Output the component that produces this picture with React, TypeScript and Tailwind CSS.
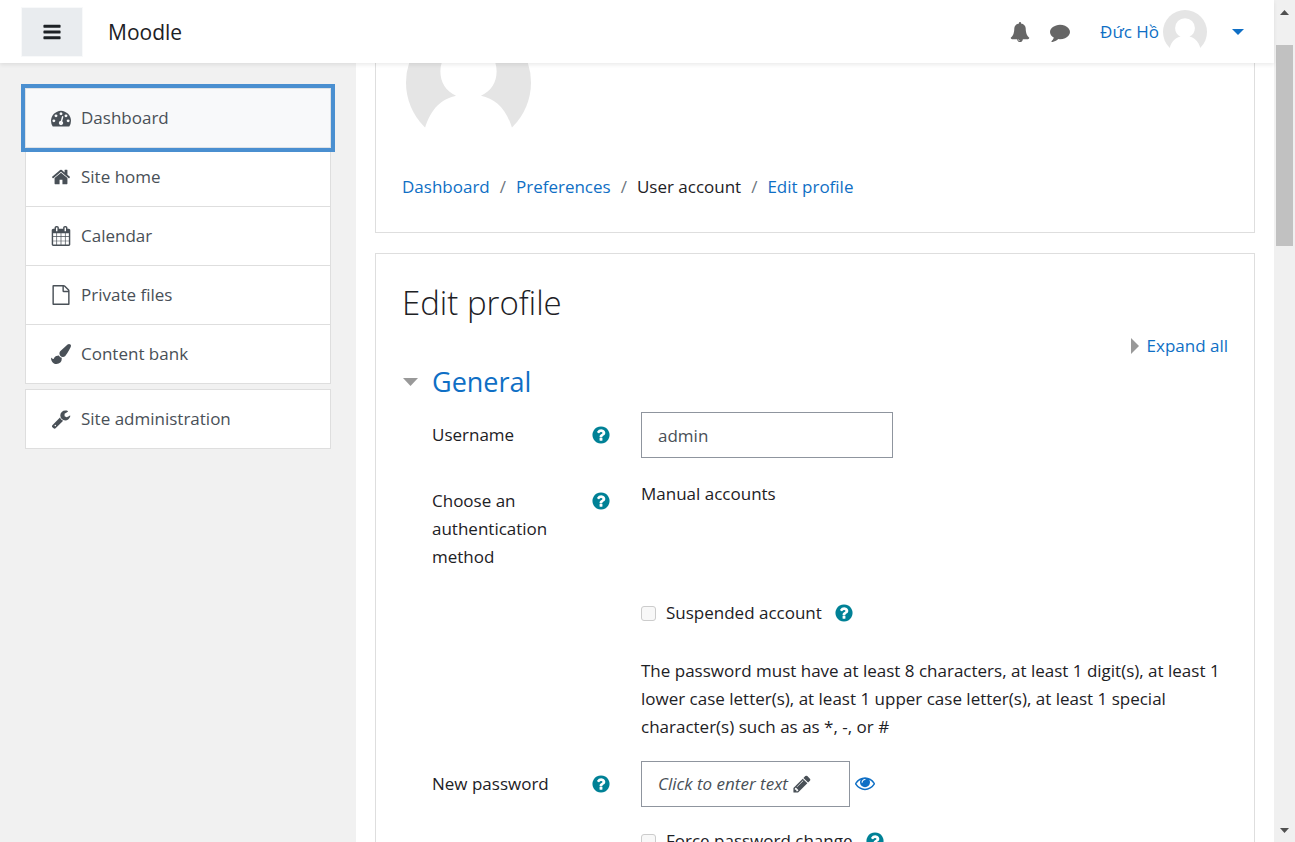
import React from "react";

const paths = {
  bars: "M1664 1344v128q0 26-19 45t-45 19h-1408q-26 0-45-19t-19-45v-128q0-26 19-45t45-19h1408q26 0 45 19t19 45zm0-512v128q0 26-19 45t-45 19h-1408q-26 0-45-19t-19-45v-128q0-26 19-45t45-19h1408q26 0 45 19t19 45zm0-512v128q0 26-19 45t-45 19h-1408q-26 0-45-19t-19-45v-128q0-26 19-45t45-19h1408q26 0 45 19t19 45z",
  home: "M1472 992v480q0 26-19 45t-45 19h-384v-384h-256v384h-384q-26 0-45-19t-19-45v-480q0-1 .5-3t.5-3l575-474 575 474q1 2 1 6zm223-69l-62 74q-8 9-21 11h-3q-13 0-21-7l-692-577-692 577q-12 8-24 7-13-2-21-11l-62-74q-8-10-7-23.5t11-21.5l719-599q32-26 76-26t76 26l244 204v-195q0-14 9-23t23-9h192q14 0 23 9t9 23v408l219 182q10 8 11 21.5t-7 23.5z",
  calendar: "M192 1664h288v-288h-288v288zm352 0h320v-288h-320v288zm-352-352h288v-320h-288v320zm352 0h320v-320h-320v320zm-352-384h288v-288h-288v288zm736 736h320v-288h-320v288zm-384-736h320v-288h-320v288zm768 736h288v-288h-288v288zm-384-352h320v-320h-320v320zm-352-864v-288q0-13-9.5-22.5t-22.5-9.5h-64q-13 0-22.5 9.5t-9.5 22.5v288q0 13 9.5 22.5t22.5 9.5h64q13 0 22.5-9.5t9.5-22.5zm736 864h288v-320h-288v320zm-384-384h320v-288h-320v288zm384 0h288v-288h-288v288zm32-480v-288q0-13-9.5-22.5t-22.5-9.5h-64q-13 0-22.5 9.5t-9.5 22.5v288q0 13 9.5 22.5t22.5 9.5h64q13 0 22.5-9.5t9.5-22.5zm384-64v1280q0 52-38 90t-90 38h-1408q-52 0-90-38t-38-90v-1280q0-52 38-90t90-38h128v-96q0-66 47-113t113-47h64q66 0 113 47t47 113v96h384v-96q0-66 47-113t113-47h64q66 0 113 47t47 113v96h128q52 0 90 38t38 90z",
  file: "M1596 380q28 28 48 76t20 88v1152q0 40-28 68t-68 28h-1344q-40 0-68-28t-28-68v-1600q0-40 28-68t68-28h896q40 0 88 20t76 48zm-444-244v376h376q-10-29-22-41l-313-313q-12-12-41-22zm384 1528v-1024h-416q-40 0-68-28t-28-68v-416h-768v1536h1280z",
  brush: "M1615 0q70 0 122.5 46.5t52.5 116.5q0 63-45 151-332 629-465 752-97 91-218 91-126 0-216.5-92.5t-90.5-219.5q0-128 92-212l638-579q59-54 130-54zm-909 1034q39 76 106.5 130t150.5 76l1 71q4 213-129.5 347t-348.5 134q-123 0-218-46.5t-152.5-127.5-86.5-183-29-220q7 5 41 30t62 44.5 59 36.5 46 17q41 0 55-37 25-66 57.5-112.5t69.5-76 88-47.5 103-25.5 125-10.5z",
  wrench: "M448 1472q0-26-19-45t-45-19-45 19-19 45 19 45 45 19 45-19 19-45zm644-420l-682 682q-37 37-90 37-52 0-91-37l-106-108q-38-36-38-90 0-53 38-91l681-681q39 98 114.5 173.5t173.5 114.5zm634-435q0 39-23 106-47 134-164.5 217.5t-258.5 83.5q-185 0-316.5-131.5t-131.5-316.5 131.5-316.5 316.5-131.5q58 0 121.5 16.5t107.5 46.5q16 11 16 28t-16 28l-293 169v224l193 107q5-3 79-48.5t135.5-81 70.5-35.5q15 0 23.5 10t8.5 25z",
  question: "M1024 1376v-192q0-14-9-23t-23-9h-192q-14 0-23 9t-9 23v192q0 14 9 23t23 9h192q14 0 23-9t9-23zm256-672q0-88-55.5-163t-138.5-116-170-41q-243 0-371 213-15 24 8 42l132 100q7 6 19 6 16 0 25-12 53-68 86-92 34-24 86-24 48 0 85.5 26t37.5 59q0 38-20 61t-68 45q-63 28-115.5 86.5t-52.5 125.5v36q0 14 9 23t23 9h192q14 0 23-9t9-23q0-19 21.5-49.5t54.5-49.5q32-18 49-28.5t46-35 44.5-48 28-60.5 12.5-81zm384 192q0 209-103 385.5t-279.5 279.5-385.5 103-385.5-103-279.5-279.5-103-385.5 103-385.5 279.5-279.5 385.5-103 385.5 103 279.5 279.5 103 385.5z",
  pencil: "M491 1536l91-91-235-235-91 91v107h128v128h107zm523-928q0-22-22-22-10 0-17 7l-542 542q-7 7-7 17 0 22 22 22 10 0 17-7l542-542q7-7 7-17zm-54-192l416 416-832 832h-416v-416zm683 96q0 53-37 90l-166 166-416-416 166-165q36-38 90-38 53 0 91 38l235 234q37 39 37 91z",
  eye: "M1664 960q-152-236-381-353 61 104 61 225 0 185-131.5 316.5t-316.5 131.5-316.5-131.5-131.5-316.5q0-121 61-225-229 117-381 353 133 205 333.5 326.5t434.5 121.5 434.5-121.5 333.5-326.5zm-720-384q0-20-14-34t-34-14q-125 0-214.5 89.5t-89.5 214.5q0 20 14 34t34 14 34-14 14-34q0-86 61-147t147-61q20 0 34-14t14-34zm848 384q0 34-20 69-140 230-376.5 368.5t-499.5 138.5-499.5-139-376.5-368q-20-35-20-69t20-69q140-229 376.5-368t499.5-139 499.5 139 376.5 368q20 35 20 69z",
  tachometer: "M384 1152q0-53-37.5-90.5t-90.5-37.5-90.5 37.5-37.5 90.5 37.5 90.5 90.5 37.5 90.5-37.5 37.5-90.5zm192-448q0-53-37.5-90.5t-90.5-37.5-90.5 37.5-37.5 90.5 37.5 90.5 90.5 37.5 90.5-37.5 37.5-90.5zm428 481l101-382q6-26-7.5-48.5t-38.5-29.5-48 6.5-30 39.5l-101 382q-60 5-107 43.5t-63 98.5q-20 77 20 146t117 89 146-20 89-117q16-60-6-117t-72-91zm660-33q0-53-37.5-90.5t-90.5-37.5-90.5 37.5-37.5 90.5 37.5 90.5 90.5 37.5 90.5-37.5 37.5-90.5zm-640-640q0-53-37.5-90.5t-90.5-37.5-90.5 37.5-37.5 90.5 37.5 90.5 90.5 37.5 90.5-37.5 37.5-90.5zm448 192q0-53-37.5-90.5t-90.5-37.5-90.5 37.5-37.5 90.5 37.5 90.5 90.5 37.5 90.5-37.5 37.5-90.5zm320 448q0 261-141 483-19 29-54 29h-1402q-35 0-54-29-141-221-141-483 0-182 71-348t191-286 286-191 348-71 348 71 286 191 191 286 71 348z",
  bell: "M912 1696q0-16-16-16-59 0-101.5-42.5t-42.5-101.5q0-16-16-16t-16 16q0 73 51.5 124.5t124.5 51.5q16 0 16-16zm816-288q0 52-38 90t-90 38h-448q0 106-75 181t-181 75-181-75-75-181h-448q-52 0-90-38t-38-90q50-42 91-88t85-119.5 74.5-158.5 50-206 19.5-260q0-152 117-282.5t307-158.5q-8-19-8-39 0-40 28-68t68-28 68 28 28 68q0 20-8 39 190 28 307 158.5t117 282.5q0 139 19.5 260t50 206 74.5 158.5 85 119.5 91 88z",
  comment: "M1792 896q0 174-120 321.5t-326 233-450 85.5q-70 0-145-8-198 175-460 242-49 14-114 22-17 2-30.5-9t-17.5-29v-1q-3-4-.5-12t2-10 4.5-9.5l6-9 7-8.5 8-9q7-8 31-34.5t34.5-38 31-39.5 32.5-51 27-59 26-76q-157-89-247.5-220t-90.5-281q0-130 71-248.5t191-204.5 286-136.5 348-50.5q244 0 450 85.5t326 233 120 321.5z",
};

type IconName = keyof typeof paths;

function Icon({ name, className = "" }: { name: IconName; className?: string }) {
  return (
    <svg viewBox="0 0 1792 1792" aria-hidden="true" className={`size-5 shrink-0 fill-current ${className}`}>
      <path d={paths[name]} />
    </svg>
  );
}

function Avatar({ className }: { className: string }) {
  return (
    <svg viewBox="0 0 100 100" aria-hidden="true" className={`shrink-0 ${className}`}>
      <circle cx="50" cy="50" r="50" fill="#e5e5e5" />
      <path d="M15 87C20 70 29 63 40 60.500C32 57 27.500 50 27.500 41a22.500 22.500 0 0 1 45 0C72.500 50 68 57 60 60.500C71 63 80 70 85 87V101H15z" fill="#fff" />
    </svg>
  );
}

function Help({ topic }: { topic: string }) {
  return (
    <button type="button" aria-label={`Help with ${topic}`} className="flex text-[#008196]">
      <Icon name="question" />
    </button>
  );
}

const nav: { icon: IconName; label: string }[] = [
  { icon: "home", label: "Site home" },
  { icon: "calendar", label: "Calendar" },
  { icon: "file", label: "Private files" },
  { icon: "brush", label: "Content bank" },
];

function NavLink({ icon, label, className }: { icon: IconName; label: string; className: string }) {
  return (
    <a href="#" className={`flex items-center gap-2.5 px-[25px] text-[#495057] ${className}`}>
      <Icon name={icon} />
      {label}
    </a>
  );
}

function Crumb({ children }: { children: React.ReactNode }) {
  return <li className="flex gap-2.5 not-first:before:text-[#6c757d] not-first:before:content-['/']">{children}</li>;
}

function Row({ label, help, id, children }: { label?: string; help?: boolean; id?: string; children: React.ReactNode }) {
  return (
    <div className="flex">
      <div className="flex w-[209px] shrink-0 items-start justify-between pt-[9px] pr-[30px]">
        {label && (id ? <label htmlFor={id} className="w-36">{label}</label> : <span className="w-36">{label}</span>)}
        {help && label && <div className="pt-1"><Help topic={label} /></div>}
      </div>
      <div className="min-w-0 flex-1">{children}</div>
    </div>
  );
}

function CheckRow({ id, label }: { id: string; label: string }) {
  return (
    <div className="flex items-center">
      <input id={id} type="checkbox" className="mr-2.5 size-[15px] appearance-none rounded-[3px] border border-[#ccc] bg-[#f8f8f8]" />
      <label htmlFor={id} className="mr-3">{label}</label>
      <Help topic={label} />
    </div>
  );
}

export default function App() {
  return (
    <div className="flex h-screen overflow-hidden bg-white font-['Open_Sans','Noto_Sans',sans-serif] text-[17px] leading-7 text-[#1d2125]">
      <div className="flex min-w-0 flex-1 flex-col">
        <header className="z-10 flex h-[63px] shrink-0 items-center bg-white pl-[21px] pr-[30px] shadow-[0_2px_4px_rgba(0,0,0,0.08)]">
          <button type="button" aria-label="Side panel" className="flex h-[50px] w-[62px] items-center justify-center border border-[#f8f9fa] bg-[#e9ecef]">
            <Icon name="bars" />
          </button>
          <a href="#" className="ml-[25px] text-[21px]">Moodle</a>
          <div className="ml-auto flex items-center text-[#0f6fc5]">
            <button type="button" aria-label="Notifications" className="mr-5 text-[#666]"><Icon name="bell" /></button>
            <button type="button" aria-label="Messages" className="mr-[30px] text-[#666]"><Icon name="comment" /></button>
            <button type="button" className="flex items-center">
              <span className="mr-1">Đức Hồ</span>
              <Avatar className="size-11" />
              <svg viewBox="0 0 12 6" aria-hidden="true" className="ml-[25px] h-1.5 w-3 fill-current"><path d="M0 0h12L6 6z" /></svg>
            </button>
          </div>
        </header>

        <div className="flex min-h-0 flex-1 overflow-hidden">
          <aside className="w-[356px] shrink-0 bg-[#f1f1f1] px-[25px] pt-[25px]">
            <nav aria-label="Site">
              <NavLink icon="tachometer" label="Dashboard" className="h-[60px] border border-[#dee2e6] bg-[#f8f9fa] outline-4 outline-[#4a8fd0]" />
              {nav.map((n) => (
                <NavLink key={n.label} icon={n.icon} label={n.label} className="h-[59px] border border-t-0 border-[#dedede] bg-white" />
              ))}
              <NavLink icon="wrench" label="Site administration" className="mt-[5px] h-[60px] border border-[#dedede] bg-white" />
            </nav>
          </aside>

          <main className="min-w-0 flex-1 pr-[19px] pl-[19px]">
            <section className="-mt-[70px] border border-[#dedede] px-[26px] pt-[26px] pb-[31px]">
              <div className="flex items-start gap-[26px] pl-1">
                <Avatar className="size-[125px]" />
                <h1 className="pt-1 text-[35px] leading-[42px] font-light">Đức Hồ</h1>
              </div>
              <nav aria-label="Breadcrumb" className="mt-7">
                <ol className="flex flex-wrap gap-2.5 text-[#0f6fc5]">
                  <Crumb><a href="#">Dashboard</a></Crumb>
                  <Crumb><a href="#">Preferences</a></Crumb>
                  <Crumb><span className="text-[#1d2125]">User account</span></Crumb>
                  <Crumb><a href="#">Edit profile</a></Crumb>
                </ol>
              </nav>
            </section>

            <section className="mt-5 border border-[#dedede] px-[26px] pt-7">
              <h2 className="text-[33px] leading-[42px] font-light">Edit profile</h2>
              <div className="mt-2 flex justify-end">
                <a href="#" className="flex items-center gap-2 text-[#0f6fc5]">
                  <svg viewBox="0 0 8 16" aria-hidden="true" className="h-4 w-2 fill-[#999]"><path d="M0 0v16l8-8z" /></svg>
                  Expand all
                </a>
              </div>
              <form className="pl-[30px]">
                <h3 className="mt-1 -ml-[30px]">
                  <a href="#" className="flex items-center gap-[14px] pl-px text-[27px] leading-9 text-[#0f6fc5]">
                    <svg viewBox="0 0 15 8" aria-hidden="true" className="h-2 w-[15px] fill-[#999]"><path d="M0 0h15L7.500 8z" /></svg>
                    General
                  </a>
                </h3>
                <div className="mt-3 flex flex-col gap-5">
                  <Row label="Username" help id="username">
                    <input id="username" defaultValue="admin" className="block h-[46px] w-[252px] border border-[#8f959e] px-4 text-[#495057]" />
                  </Row>
                  <Row label="Choose an authentication method" help>
                    <p className="pt-0.5">Manual accounts</p>
                  </Row>
                  <div className="mt-2 flex flex-col gap-[30px] pl-[209px]">
                    <CheckRow id="suspended" label="Suspended account" />
                    <p>
                      The password must have at least 8 characters, at least 1 digit(s), at least 1 lower case letter(s), at least 1 upper case letter(s), at least 1 special character(s) such as as *, -, or #
                    </p>
                  </div>
                  <Row label="New password" help>
                    <div className="flex">
                      <button type="button" className="flex h-[46px] w-[209px] items-center gap-1 border border-[#8f959e] px-4 text-[#495057] italic">
                        Click to enter text
                        <Icon name="pencil" />
                      </button>
                      <button type="button" aria-label="Reveal" className="ml-[5px] flex pt-3 text-[#0f6fc5]"><Icon name="eye" /></button>
                    </div>
                  </Row>
                  <div className="pl-[209px]">
                    <CheckRow id="force" label="Force password change" />
                  </div>
                </div>
              </form>
            </section>
          </main>
        </div>
      </div>

      <div role="group" aria-label="Page scroll" className="flex w-[21px] shrink-0 flex-col bg-[#f0f0f0] px-0.5">
        <button type="button" aria-label="Scroll up" className="flex h-6 items-center justify-center">
          <svg viewBox="0 0 9 5" aria-hidden="true" className="h-[5px] w-[9px] fill-[#505050]"><path d="M0 5h9L4.500 0z" /></svg>
        </button>
        <div className="flex flex-1 flex-col pt-[21px]">
          <div className="h-[26%] max-h-full bg-[#c1c1c1]" />
        </div>
        <button type="button" aria-label="Scroll down" className="flex h-6 items-center justify-center">
          <svg viewBox="0 0 9 5" aria-hidden="true" className="h-[5px] w-[9px] fill-[#505050]"><path d="M0 0h9L4.500 5z" /></svg>
        </button>
      </div>
    </div>
  );
}
